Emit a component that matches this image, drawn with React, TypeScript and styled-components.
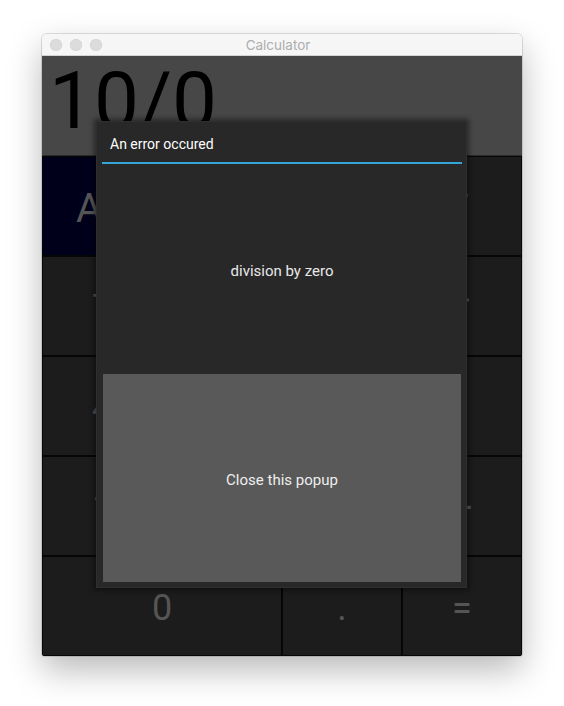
import React from 'react';
import styled, { createGlobalStyle } from 'styled-components';

const Global = createGlobalStyle`
  html, body { margin: 0; padding: 0; background: #ffffff; }
  body {
    width: 564px;
    height: 706px;
    overflow: hidden;
    font-family: Roboto, "Noto Sans", sans-serif;
  }
  * { box-sizing: border-box; }
`;

const Page = styled.div`
  padding: 34px 0 0 42px;
`;

const Window = styled.div`
  width: 480px;
  border-radius: 5px 5px 3px 3px;
  overflow: hidden;
  box-shadow: 0 0 0 1px rgba(0, 0, 0, 0.12), 0 14px 34px rgba(0, 0, 0, 0.28);
`;

const TitleBar = styled.div`
  position: relative;
  height: 22px;
  background: #f6f6f6;
  border-bottom: 1px solid #d4d4d4;
  display: flex;
  align-items: center;
  padding-left: 8px;
`;

const Lights = styled.div`
  display: flex;
  gap: 8px;
`;

const Light = styled.span`
  width: 12px;
  height: 12px;
  border-radius: 50%;
  background: #dcdcdc;
  box-shadow: inset 0 0 0 0.5px #d0d0d0;
`;

const WindowTitle = styled.div`
  flex: 1;
  text-align: center;
  margin-right: 68px;
  font-family: Inter, "Liberation Sans", sans-serif;
  font-size: 13.5px;
  color: #adadad;
`;

const Content = styled.div`
  position: relative;
  display: grid;
  grid-template-columns: repeat(4, 120px);
  grid-template-rows: repeat(6, 100px);
  background: #000;
`;

const Display = styled.div`
  grid-column: 1 / -1;
  background: #474747;
  box-shadow: inset 0 -1px 0 #2a2a2a;
  color: #000;
  font-size: 80px;
  line-height: 1;
  padding: 5px 0 0 7px;
  white-space: nowrap;
`;

const Key = styled.div<{ $bg?: string; $span?: number; $size?: number }>`
  grid-column: span ${(p) => p.$span ?? 1};
  background: ${(p) => p.$bg ?? '#1c1c1c'};
  border: 1px solid #060606;
  color: #555555;
  font-size: ${(p) => p.$size ?? 36}px;
  display: flex;
  align-items: center;
  justify-content: center;
  padding-top: 4px;
`;

const Popup = styled.div`
  position: absolute;
  left: 54px;
  top: 65px;
  width: 371px;
  height: 467px;
  background: #282828;
  box-shadow: inset 0 0 0 1px #2f2f2f, 0 0 5px 2px rgba(0, 0, 0, 0.45);
  padding: 0 5px 6px 6px;
  display: flex;
  flex-direction: column;
`;

const PopupTitle = styled.div`
  height: 41px;
  display: flex;
  align-items: center;
  padding: 5px 0 0 8px;
  font-size: 14px;
  color: #ffffff;
`;

const Separator = styled.div`
  height: 2px;
  background: #33a6d6;
`;

const Message = styled.div`
  height: 210px;
  display: flex;
  align-items: center;
  justify-content: center;
  padding-top: 4px;
  font-size: 15px;
  color: #e8e8e8;
`;

const CloseButton = styled.button`
  height: 208px;
  margin: 0 1px;
  border: none;
  background: #595959;
  color: #eeeeee;
  font-family: Roboto, "Noto Sans", sans-serif;
  font-size: 15px;
  display: flex;
  align-items: center;
  justify-content: center;
  padding: 4px 0 0;
`;

const keys: { label: string; bg?: string; span?: number; size?: number }[] = [
  { label: 'AC', bg: '#00001b', size: 40 },
  { label: '+/-' },
  { label: '%' },
  { label: '/' },
  { label: '7' },
  { label: '8' },
  { label: '9' },
  { label: '*' },
  { label: '4' },
  { label: '5' },
  { label: '6' },
  { label: '-' },
  { label: '1' },
  { label: '2' },
  { label: '3' },
  { label: '+' },
  { label: '0', span: 2 },
  { label: '.' },
  { label: '=' },
];

export default function App() {
  return (
    <>
      <Global />
      <Page>
        <Window>
          <TitleBar>
            <Lights>
              <Light />
              <Light />
              <Light />
            </Lights>
            <WindowTitle>Calculator</WindowTitle>
          </TitleBar>
          <Content>
            <Display>10/0</Display>
            {keys.map((k, i) => (
              <Key key={i} $bg={k.bg} $span={k.span} $size={k.size}>
                {k.label}
              </Key>
            ))}
            <Popup>
              <PopupTitle>An error occured</PopupTitle>
              <Separator />
              <Message>division by zero</Message>
              <CloseButton>Close this popup</CloseButton>
            </Popup>
          </Content>
        </Window>
      </Page>
    </>
  );
}
